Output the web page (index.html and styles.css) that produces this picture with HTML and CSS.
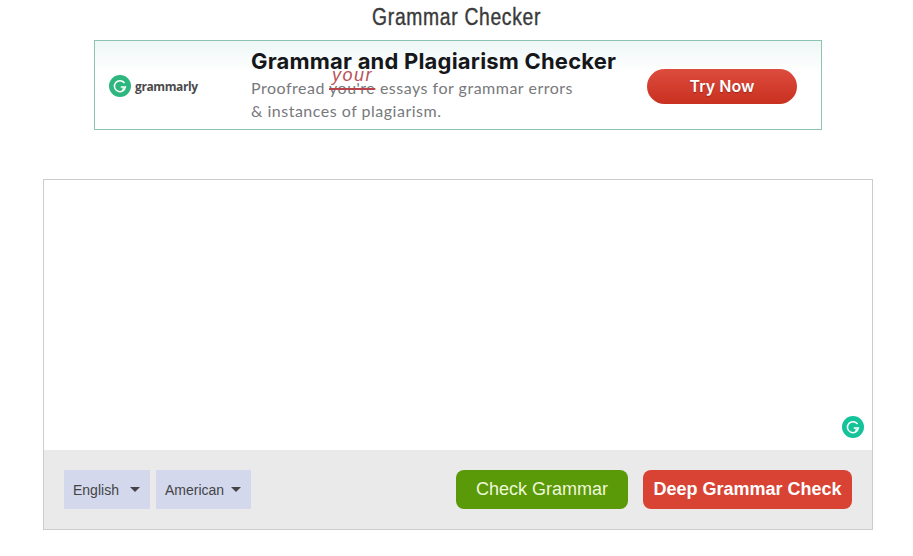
FILE: index.html
```html
<!DOCTYPE html>
<html lang="en">
<head>
    <meta charset="UTF-8">
    <meta name="viewport" content="width=device-width, initial-scale=1.0">
    <title>Grammar Checker</title>
    <link rel="stylesheet" href="styles.css">
</head>
<body>
    <h1 class="page-title"><span class="title-text">Grammar Checker</span></h1>

    <!-- Ad banner -->
    <div class="banner">
        <div class="brand">
            <svg class="g-logo" width="22" height="22" viewBox="0 0 22 22">
                <circle cx="11" cy="11" r="11" fill="#2eb67f"/>
                <path d="M15.6 8.2A5.5 5.5 0 1 0 16.4 12H11.8" fill="none" stroke="#fff" stroke-width="1.5"/>
                <path d="M13.6 12.2l2.6 2.4-2.9 1.4z" fill="#fff"/>
            </svg>
            <span class="brand-name">grammarly</span>
        </div>
        <div class="pitch">
            <div class="pitch-title">Grammar and Plagiarism Checker</div>
            <div class="pitch-line">Proofread <span class="struck">you're<span class="scrawl">your</span></span> essays for grammar errors</div>
            <div class="pitch-line">&amp; instances of plagiarism.</div>
        </div>
        <div class="try-btn">Try Now</div>
    </div>

    <!-- Checker box -->
    <div class="checker">
        <div class="editor">
            <svg class="g-float" width="22" height="22" viewBox="0 0 22 22">
                <circle cx="11" cy="11" r="11" fill="#15c39a"/>
                <path d="M15.6 8.2A5.5 5.5 0 1 0 16.4 12H11.8" fill="none" stroke="#fff" stroke-width="1.5"/>
                <path d="M13.6 12.2l2.6 2.4-2.9 1.4z" fill="#fff"/>
            </svg>
        </div>
        <div class="toolbar">
            <div class="select select-lang">English <span class="caret"></span></div>
            <div class="select select-dialect">American <span class="caret"></span></div>
            <button class="btn btn-check">Check Grammar</button>
            <button class="btn btn-deep">Deep Grammar Check</button>
        </div>
    </div>
</body>
</html>
```

FILE: styles.css
```css
/* General styling */
body {
    margin: 0;
    background-color: #fff;
    font-family: "Liberation Sans", Arial, sans-serif;
    color: #333;
}

.page-title {
    margin: 0;
    height: 40px;
    padding-top: 4px;
    box-sizing: border-box;
    text-align: center;
    font-size: 23px;
    line-height: 27px;
    font-weight: 400;
    color: #3a3a3a;
}

/* no narrow family installed, so squeeze the title */
.title-text {
    display: inline-block;
    transform: scaleX(0.84);
    letter-spacing: 0.8px;
    -webkit-text-stroke: 0.4px #3a3a3a;
}

/* Banner */
.banner {
    width: 728px;
    height: 90px;
    box-sizing: border-box;
    margin-left: 94px;
    display: flex;
    align-items: center;
    border: 1px solid #8cc4b0;
    background: linear-gradient(#eef6f6, #fff 35%);
}

.brand {
    width: 156px;
    margin-top: 2px;
    padding-left: 14px;
    box-sizing: border-box;
    display: flex;
    align-items: center;
    gap: 4px;
}

.brand-name {
    font-family: "Open Sans", sans-serif;
    font-size: 12px;
    font-weight: 700;
    letter-spacing: -0.4px;
    color: #4a4a4a;
}

.pitch {
    width: 396px;
    margin-top: -2px;
}

.pitch-title {
    font-family: "Inter", sans-serif;
    font-size: 22px;
    font-weight: 700;
    line-height: 29px;
    letter-spacing: 0.2px;
    color: #15171a;
}

.pitch-line {
    font-family: "Lato", sans-serif;
    font-size: 16px;
    line-height: 23px;
    letter-spacing: 0.5px;
    color: #77797c;
}

.pitch-title + .pitch-line {
    margin-top: 0;
}

.struck {
    position: relative;
    text-decoration: line-through;
    text-decoration-color: #b9434b;
    text-decoration-thickness: 1.5px;
}

.scrawl {
    position: absolute;
    left: 3px;
    top: -13px;
    font-family: "Liberation Sans", sans-serif;
    font-style: italic;
    font-size: 18px;
    letter-spacing: 1.5px;
    line-height: 20px;
    color: #b9535a;
}

.try-btn {
    width: 150px;
    height: 35px;
    margin-top: 2px;
    border-radius: 18px;
    background: linear-gradient(#dd4c3e, #c9301f);
    color: #fff;
    font-family: "Inter", sans-serif;
    font-size: 16px;
    font-weight: 600;
    line-height: 35px;
    text-align: center;
    text-shadow: 0 1px 1px rgba(90, 20, 10, 0.5);
}

/* Checker box */
.checker {
    width: 830px;
    height: 351px;
    box-sizing: border-box;
    margin: 49px 0 0 43px;
    border: 1px solid #ccc;
}

.editor {
    position: relative;
    height: 270px;
    background-color: #fff;
}

.g-float {
    position: absolute;
    right: 8px;
    bottom: 12px;
}

.toolbar {
    height: 79px;
    padding: 0 20px;
    display: flex;
    align-items: center;
    background-color: #eaeaea;
}

.select {
    height: 39px;
    margin-right: 6px;
    display: flex;
    align-items: center;
    box-sizing: border-box;
    background-color: #d3d8ed;
    color: #444;
    font-size: 14px;
}

.select-lang {
    width: 86px;
    padding-left: 9px;
    gap: 11px;
}

.select-dialect {
    width: 95px;
    padding-left: 9px;
    gap: 7px;
}

.caret {
    width: 0;
    height: 0;
    border-left: 5px solid transparent;
    border-right: 5px solid transparent;
    border-top: 5px solid #444;
}

.btn {
    height: 39px;
    border: none;
    border-radius: 8px;
    padding: 0;
    color: #fff;
    font-family: "Liberation Sans", Arial, sans-serif;
    font-size: 18px;
    cursor: pointer;
}

.btn-check {
    width: 172px;
    margin-left: auto;
    background-color: #5a9a08;
    color: #eef7d8;
}

.btn-deep {
    width: 209px;
    margin-left: 15px;
    background-color: #d94334;
    font-weight: 700;
}
```
